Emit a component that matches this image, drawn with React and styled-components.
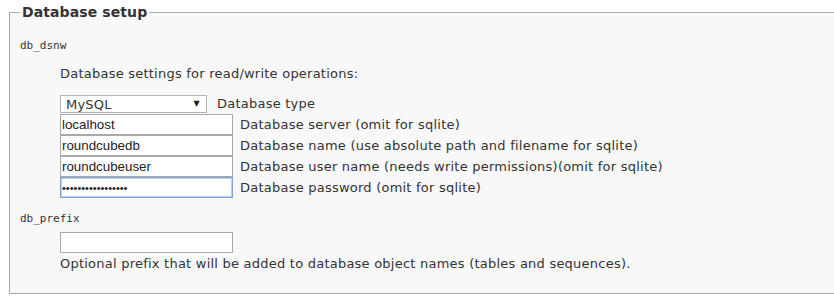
import styled, { createGlobalStyle } from "styled-components";

const GlobalStyle = createGlobalStyle`
  html, body {
    margin: 0;
    padding: 0;
    background: #fff;
    overflow: hidden;
  }
  body {
    font-family: "DejaVu Sans", Verdana, sans-serif;
    font-size: 13px;
    letter-spacing: 0.23px;
    color: #333;
  }
`;

const Fieldset = styled.fieldset`
  margin: 3px 0 0 9px;
  padding: 0 10px 0 10px;
  width: 900px;
  height: 291px;
  box-sizing: border-box;
  min-width: 0;
  border: 1px solid #a9a9a9;
  background: #f8f8f8;
`;

const Legend = styled.legend`
  padding: 0 2px;
  font-size: 14px;
  line-height: 19px;
  font-weight: bold;
  letter-spacing: 0.1px;
  color: #333;
`;

const List = styled.dl`
  margin: 0;
`;

const Key = styled.dt`
  font-family: "DejaVu Sans Mono", monospace;
  font-size: 11px;
  line-height: 14px;
  letter-spacing: 0;
  margin: ${(p) => p.$top}px 0 0 0;
  color: #333;
`;

const Block = styled.dd`
  margin: 0 0 0 40px;
  padding: 0;
`;

const Hint = styled.p`
  margin: ${(p) => p.$top}px 0 0 0;
  line-height: 16px;
`;

const Stack = styled.div`
  display: flex;
  flex-direction: column;
`;

const Row = styled.div`
  display: flex;
  align-items: center;
  gap: ${(p) => p.$gap || 7}px;
  margin-top: ${(p) => p.$top || 0}px;
`;

const SelectWrap = styled.div`
  position: relative;
  width: 147px;
  height: 18px;
`;

const Select = styled.select`
  appearance: none;
  width: 100%;
  height: 100%;
  box-sizing: border-box;
  margin: 0;
  padding: 0 0 0 5px;
  border: 1px solid #b4b4b4;
  border-radius: 0;
  background: #fff;
  font-family: "DejaVu Sans", Verdana, sans-serif;
  font-size: 13px;
  letter-spacing: 0.2px;
  color: #333;
`;

const Arrow = styled.span`
  position: absolute;
  right: 7px;
  top: 4px;
  font-size: 8px;
  line-height: 10px;
  color: #222;
  pointer-events: none;
`;

const Input = styled.input`
  width: 173px;
  height: 21px;
  box-sizing: border-box;
  margin: 0;
  padding: 0 1px;
  border: 1px solid ${(p) => (p.$focus ? "#7ba4dc" : "#a9a9a9")};
  box-shadow: ${(p) => (p.$focus ? "inset 0 0 0 1px #b9d1f0" : "none")};
  background: #fff;
  font-family: "Liberation Sans", Arial, sans-serif;
  font-size: ${(p) => (p.type === "password" ? 11 : 13.33)}px;
  letter-spacing: 0;
  color: #222;
  outline: none;
`;

const Label = styled.label`
  line-height: 16px;
  white-space: nowrap;
`;

const fields = [
  { value: "localhost", label: "Database server (omit for sqlite)" },
  { value: "roundcubedb", label: "Database name (use absolute path and filename for sqlite)" },
  { value: "roundcubeuser", label: "Database user name (needs write permissions)(omit for sqlite)" },
  { value: "roundcubepassword", label: "Database password (omit for sqlite)", type: "password", focus: true },
];

export default function App() {
  return (
    <>
      <GlobalStyle />
      <Fieldset>
        <Legend>Database setup</Legend>
        <List>
          <Key $top={17}>db_dsnw</Key>
          <Block>
            <Hint $top={13}>Database settings for read/write operations:</Hint>
            <Stack>
              <Row $top={13} $gap={10}>
                <SelectWrap>
                  <Select defaultValue="mysql">
                    <option value="mysql">MySQL</option>
                    <option value="pgsql">PostgreSQL</option>
                    <option value="sqlite">SQLite</option>
                  </Select>
                  <Arrow>▼</Arrow>
                </SelectWrap>
                <Label>Database type</Label>
              </Row>
              {fields.map((f, i) => (
                <Row key={f.label} $top={i === 0 ? 1 : 0}>
                  <Input
                    type={f.type || "text"}
                    defaultValue={f.value}
                    $focus={f.focus}
                    readOnly
                  />
                  <Label>{f.label}</Label>
                </Row>
              ))}
            </Stack>
          </Block>
          <Key $top={14}>db_prefix</Key>
          <Block>
            <Row $top={6}>
              <Input type="text" defaultValue="" readOnly />
            </Row>
            <Hint $top={3}>
              Optional prefix that will be added to database object names (tables and sequences).
            </Hint>
          </Block>
        </List>
      </Fieldset>
    </>
  );
}
